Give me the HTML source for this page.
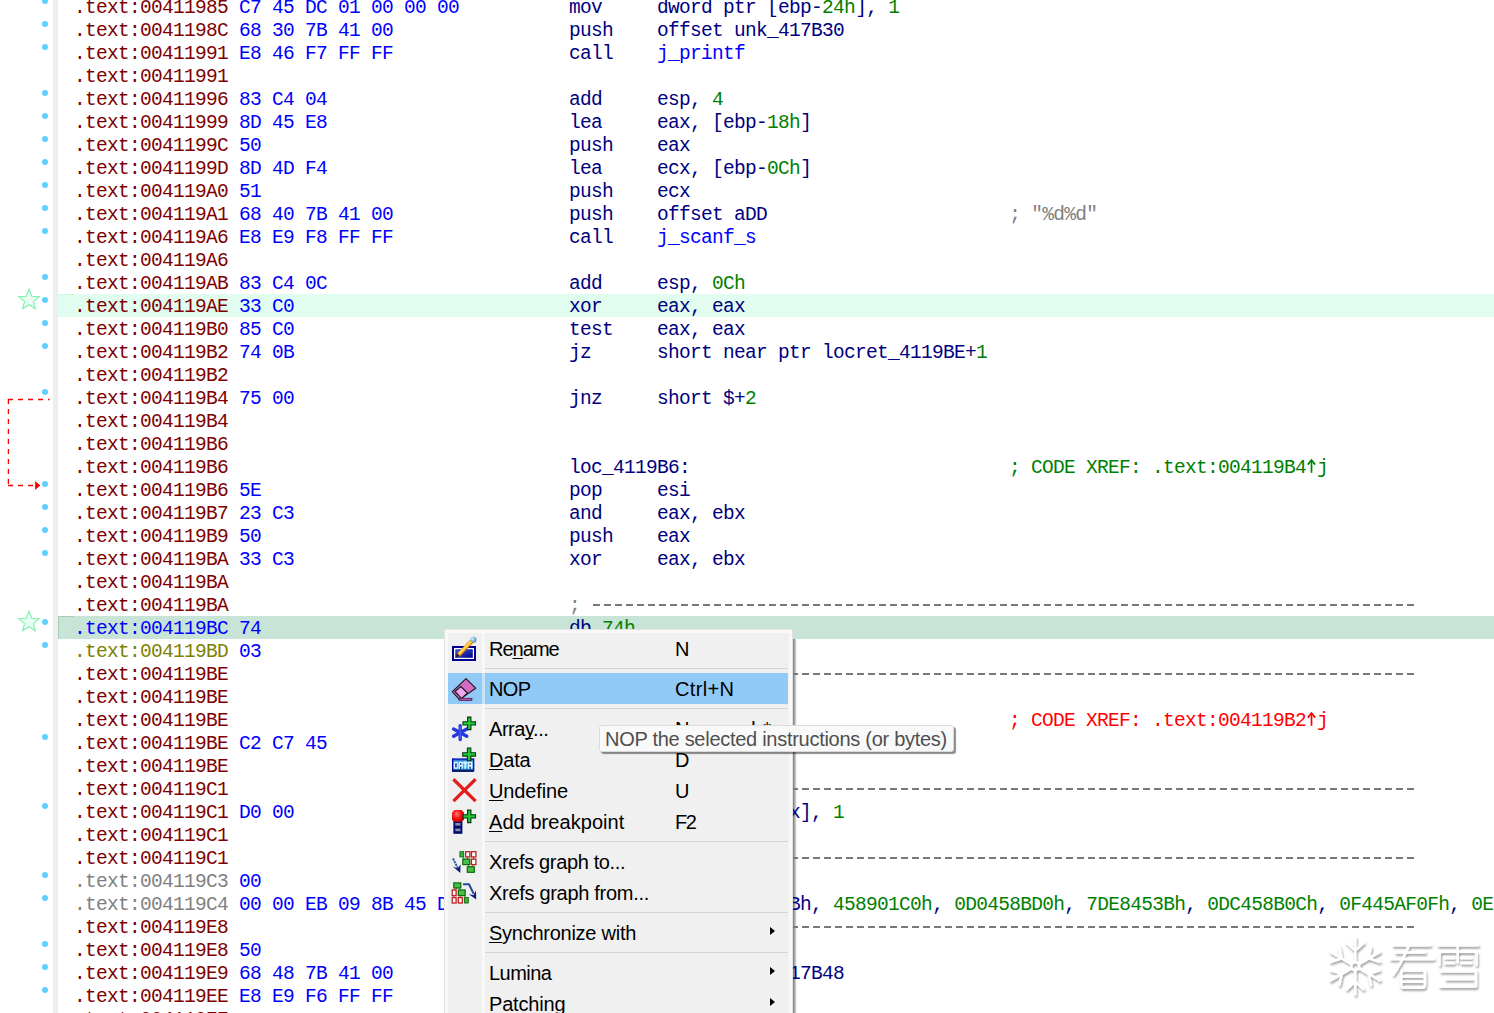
<!DOCTYPE html>
<html><head><meta charset="utf-8"><style>
html,body{margin:0;padding:0;width:1494px;height:1013px;overflow:hidden;background:#fff;position:relative}
#bar{position:absolute;left:53px;top:0;width:5px;height:1013px;background:#eeeeee}
.dot{position:absolute;left:42px;width:6px;height:6px;border-radius:50%;background:#60cffd}
#code{position:absolute;left:0;top:0;width:1494px;height:1013px}
.row{position:absolute;left:58px;right:0;height:23px;line-height:23px;padding-left:16px;white-space:pre;font-family:"Liberation Mono",monospace;font-size:19.5px;letter-spacing:-0.7017px;box-sizing:border-box}
.row>span{position:relative;top:1.6px}
.hl1{background:#e0fdef}
.hl2{background:#c8e4d6}
.a{color:#800000}.ab{color:#0000ff}.ao{color:#808000}.ag{color:#808080}
.y{color:#0000ff}.n{color:#000080}.k{color:#008000}.b{color:#0000ff}.g{color:#808080}.r{color:#ff0000}
#menu{position:absolute;left:444px;top:629px;width:349px;height:400px;box-sizing:border-box;border:1px solid #e2e2e2;background:#f9f9f9}
#menuin{position:absolute;left:448px;top:633px;width:341px;height:400px;background:#f0f0f0}
#mshadow{position:absolute;left:793px;top:636px;width:4px;height:400px;background:linear-gradient(to right,#7a7a7a,#a8a8a8 40%,#e8e8e8 80%,#fff)}
#mstrip{position:absolute;left:482px;top:633px;width:3px;height:400px;background:rgba(255,255,255,0.5);z-index:1}
.mi{position:absolute;left:448px;width:340px;height:31px}
.sel{background:#91c9f7}
.sep{position:absolute;left:485px;width:303px;height:1px;background:#d5d5d5}
.mt{position:absolute;left:489px;margin-top:1px;font-family:"Liberation Sans",sans-serif;font-size:20px;line-height:31px;height:31px;color:#000;white-space:pre;letter-spacing:-0.6px}
.ms{position:absolute;left:675px;margin-top:1px;font-family:"Liberation Sans",sans-serif;font-size:20px;line-height:31px;height:31px;color:#000;white-space:pre;letter-spacing:-0.6px}
.u{text-decoration:underline;text-decoration-skip-ink:none;text-underline-offset:2px;text-decoration-thickness:1px}
.arr{position:absolute;left:770px;width:0;height:0;border-top:4.5px solid transparent;border-bottom:4.5px solid transparent;border-left:5.5px solid #000}
.ic{position:absolute;left:448px;width:34px;height:31px}
#tip{position:absolute;left:599px;top:725px;width:355px;height:27px;box-sizing:border-box;border:1px solid #dadada;border-radius:3px;background:#f9f9f9;box-shadow:2px 2px 1px rgba(0,0,0,0.45)}
#tipt{position:absolute;left:605px;top:726px;font-family:"Liberation Sans",sans-serif;font-size:20px;line-height:27px;color:#4f4f4f;white-space:pre;letter-spacing:-0.6px}

.dash{position:absolute;left:591px;width:825px;height:2px;background:repeating-linear-gradient(to right,transparent 0,transparent 2.2px,#787878 2.2px,#787878 8.7px,transparent 8.7px,transparent 11px)}
.uarr{position:absolute;left:1306px}
.hid{color:transparent}
.curs{position:absolute;left:58px;width:16px;height:23px;box-sizing:border-box;border-left:1px solid #a6cfba;border-top:1px solid #a6cfba}
.curs1{position:absolute;left:58px;width:16px;height:1px;background:#d2f8e2}

</style></head><body>
<div id="gutter"></div>
<div id="bar"></div>
<div class="dot" style="top:-2px"></div><div class="dot" style="top:21px"></div><div class="dot" style="top:44px"></div><div class="dot" style="top:90px"></div><div class="dot" style="top:113px"></div><div class="dot" style="top:136px"></div><div class="dot" style="top:159px"></div><div class="dot" style="top:182px"></div><div class="dot" style="top:205px"></div><div class="dot" style="top:228px"></div><div class="dot" style="top:274px"></div><div class="dot" style="top:297px"></div><div class="dot" style="top:320px"></div><div class="dot" style="top:343px"></div><div class="dot" style="top:389px"></div><div class="dot" style="top:481px"></div><div class="dot" style="top:504px"></div><div class="dot" style="top:527px"></div><div class="dot" style="top:550px"></div><div class="dot" style="top:619px"></div><div class="dot" style="top:642px"></div><div class="dot" style="top:734px"></div><div class="dot" style="top:803px"></div><div class="dot" style="top:872px"></div><div class="dot" style="top:895px"></div><div class="dot" style="top:941px"></div><div class="dot" style="top:964px"></div><div class="dot" style="top:987px"></div>
<svg style="position:absolute;left:0;top:0" width="60" height="1013" viewBox="0 0 60 1013"><polygon points="29.00,289.20 31.76,296.20 39.27,296.66 33.47,301.45 35.35,308.74 29.00,304.70 22.65,308.74 24.53,301.45 18.73,296.66 26.24,296.20" fill="#e6fff2" stroke="#7ef0ae" stroke-width="1.1" stroke-linejoin="miter"/><polygon points="29.00,611.20 31.76,618.20 39.27,618.66 33.47,623.45 35.35,630.74 29.00,626.70 22.65,630.74 24.53,623.45 18.73,618.66 26.24,618.20" fill="#e6fff2" stroke="#7ef0ae" stroke-width="1.1" stroke-linejoin="miter"/><g stroke="#ff0000" stroke-width="1.3" fill="none"><path d="M8 399.5 H49.5" stroke-dasharray="5 5"/><path d="M8.4 399 V484" stroke-dasharray="5 5"/><path d="M8 485.5 H35" stroke-dasharray="5 5"/></g><path d="M35.1 480.9 L40.4 485.5 L35.1 490 Z" fill="#ff0000"/></svg>
<div id="mshadow"></div>
<div id="code">
<div class="row" style="top:-5px"><span class="a">.text:00411985</span> <span class="y">C7 45 DC 01 00 00 00</span>          <span class="n">mov</span>     <span class="n">dword ptr [ebp-</span><span class="k">24h</span><span class="n">], </span><span class="k">1</span></div>
<div class="row" style="top:18px"><span class="a">.text:0041198C</span> <span class="y">68 30 7B 41 00</span>                <span class="n">push</span>    <span class="n">offset unk_417B30</span></div>
<div class="row" style="top:41px"><span class="a">.text:00411991</span> <span class="y">E8 46 F7 FF FF</span>                <span class="n">call</span>    <span class="b">j_printf</span></div>
<div class="row" style="top:64px"><span class="a">.text:00411991</span></div>
<div class="row" style="top:87px"><span class="a">.text:00411996</span> <span class="y">83 C4 04</span>                      <span class="n">add</span>     <span class="n">esp, </span><span class="k">4</span></div>
<div class="row" style="top:110px"><span class="a">.text:00411999</span> <span class="y">8D 45 E8</span>                      <span class="n">lea</span>     <span class="n">eax, [ebp-</span><span class="k">18h</span><span class="n">]</span></div>
<div class="row" style="top:133px"><span class="a">.text:0041199C</span> <span class="y">50</span>                            <span class="n">push</span>    <span class="n">eax</span></div>
<div class="row" style="top:156px"><span class="a">.text:0041199D</span> <span class="y">8D 4D F4</span>                      <span class="n">lea</span>     <span class="n">ecx, [ebp-</span><span class="k">0Ch</span><span class="n">]</span></div>
<div class="row" style="top:179px"><span class="a">.text:004119A0</span> <span class="y">51</span>                            <span class="n">push</span>    <span class="n">ecx</span></div>
<div class="row" style="top:202px"><span class="a">.text:004119A1</span> <span class="y">68 40 7B 41 00</span>                <span class="n">push</span>    <span class="n">offset aDD</span>                      <span class="g">; "%d%d"</span></div>
<div class="row" style="top:225px"><span class="a">.text:004119A6</span> <span class="y">E8 E9 F8 FF FF</span>                <span class="n">call</span>    <span class="b">j_scanf_s</span></div>
<div class="row" style="top:248px"><span class="a">.text:004119A6</span></div>
<div class="row" style="top:271px"><span class="a">.text:004119AB</span> <span class="y">83 C4 0C</span>                      <span class="n">add</span>     <span class="n">esp, </span><span class="k">0Ch</span></div>
<div class="row hl1" style="top:294px"><span class="a">.text:004119AE</span> <span class="y">33 C0</span>                         <span class="n">xor</span>     <span class="n">eax, eax</span></div>
<div class="row" style="top:317px"><span class="a">.text:004119B0</span> <span class="y">85 C0</span>                         <span class="n">test</span>    <span class="n">eax, eax</span></div>
<div class="row" style="top:340px"><span class="a">.text:004119B2</span> <span class="y">74 0B</span>                         <span class="n">jz</span>      <span class="n">short near ptr locret_4119BE+</span><span class="k">1</span></div>
<div class="row" style="top:363px"><span class="a">.text:004119B2</span></div>
<div class="row" style="top:386px"><span class="a">.text:004119B4</span> <span class="y">75 00</span>                         <span class="n">jnz</span>     <span class="n">short $+</span><span class="k">2</span></div>
<div class="row" style="top:409px"><span class="a">.text:004119B4</span></div>
<div class="row" style="top:432px"><span class="a">.text:004119B6</span></div>
<div class="row" style="top:455px"><span class="a">.text:004119B6</span>                               <span class="n">loc_4119B6:</span>                             <span class="k">; CODE XREF: .text:004119B4 j</span></div>
<svg class="uarr" style="top:455px" width="11" height="23" viewBox="0 0 11 23"><g stroke="#008000" stroke-width="1.7" fill="none"><path d="M5.5 5.2 V17.8"/><path d="M1.8 9.6 L5.5 5 L9.2 9.6"/></g></svg>
<div class="row" style="top:478px"><span class="a">.text:004119B6</span> <span class="y">5E</span>                            <span class="n">pop</span>     <span class="n">esi</span></div>
<div class="row" style="top:501px"><span class="a">.text:004119B7</span> <span class="y">23 C3</span>                         <span class="n">and</span>     <span class="n">eax, ebx</span></div>
<div class="row" style="top:524px"><span class="a">.text:004119B9</span> <span class="y">50</span>                            <span class="n">push</span>    <span class="n">eax</span></div>
<div class="row" style="top:547px"><span class="a">.text:004119BA</span> <span class="y">33 C3</span>                         <span class="n">xor</span>     <span class="n">eax, ebx</span></div>
<div class="row" style="top:570px"><span class="a">.text:004119BA</span></div>
<div class="row" style="top:593px"><span class="a">.text:004119BA</span>                               <span class="g">;</span></div>
<div class="dash" style="top:604px"></div>
<div class="row hl2" style="top:616px"><span class="ab">.text:004119BC</span> <span class="y">74</span>                            <span class="n">db </span><span class="k">74h</span></div>
<div class="row" style="top:639px"><span class="ao">.text:004119BD</span> <span class="y">03</span>                            <span class="n">db</span>      <span class="k">3</span></div>
<div class="row" style="top:662px"><span class="a">.text:004119BE</span>                               <span class="g">;</span></div>
<div class="dash" style="top:673px"></div>
<div class="row" style="top:685px"><span class="a">.text:004119BE</span></div>
<div class="row" style="top:708px"><span class="a">.text:004119BE</span>                               <span class="n">locret_4119BE:</span>                          <span class="r">; CODE XREF: .text:004119B2 j</span></div>
<svg class="uarr" style="top:708px" width="11" height="23" viewBox="0 0 11 23"><g stroke="#ff0000" stroke-width="1.7" fill="none"><path d="M5.5 5.2 V17.8"/><path d="M1.8 9.6 L5.5 5 L9.2 9.6"/></g></svg>
<div class="row" style="top:731px"><span class="a">.text:004119BE</span> <span class="y">C2 C7 45</span>                      <span class="n">retn</span>    <span class="k">45C7h</span></div>
<div class="row" style="top:754px"><span class="a">.text:004119BE</span></div>
<div class="row" style="top:777px"><span class="a">.text:004119C1</span>                               <span class="g">;</span></div>
<div class="dash" style="top:788px"></div>
<div class="row" style="top:800px"><span class="a">.text:004119C1</span> <span class="y">D0 00</span>                         <span class="n">add</span>     <span class="n">byte ptr [eax], </span><span class="k">1</span></div>
<div class="row" style="top:823px"><span class="a">.text:004119C1</span></div>
<div class="row" style="top:846px"><span class="a">.text:004119C1</span>                               <span class="g">;</span></div>
<div class="dash" style="top:857px"></div>
<div class="row" style="top:869px"><span class="ag">.text:004119C3</span> <span class="y">00</span>                            <span class="n">db</span>      <span class="k">0</span></div>
<div class="row" style="top:892px"><span class="ag">.text:004119C4</span> <span class="y">00 00 EB 09 8B 45 DC 83</span>       <span class="n">dd</span>      <span class="n">830EB0900003Bh, </span><span class="k">458901C0h</span><span class="n">, </span><span class="k">0D0458BD0h</span><span class="n">, </span><span class="k">7DE8453Bh</span><span class="n">, </span><span class="k">0DC458B0Ch</span><span class="n">, </span><span class="k">0F445AF0Fh</span><span class="n">, </span><span class="k">0E8</span></div>
<div class="row" style="top:915px"><span class="a">.text:004119E8</span>                               <span class="g">;</span></div>
<div class="dash" style="top:926px"></div>
<div class="row" style="top:938px"><span class="a">.text:004119E8</span> <span class="y">50</span>                            <span class="n">push</span>    <span class="n">eax</span></div>
<div class="row" style="top:961px"><span class="a">.text:004119E9</span> <span class="y">68 48 7B 41 00</span>                <span class="n">push</span>    <span class="n">offset unk_417B48</span></div>
<div class="row" style="top:984px"><span class="a">.text:004119EE</span> <span class="y">E8 E9 F6 FF FF</span>                <span class="n">call</span>    <span class="b">j_printf</span></div>
<div class="row" style="top:1007px"><span class="a">.text:004119EE</span></div>
<div class="curs" style="top:616px"></div>
<div class="curs1" style="top:294px"></div>
</div>
<div id="menu"></div>
<div id="menuin"></div>
<div id="mstrip"></div>
<div class="mi sel" style="top:673px"></div>
<div class="sep" style="top:668px"></div>
<div class="sep" style="top:708px"></div>
<div class="sep" style="top:841px"></div>
<div class="sep" style="top:912px"></div>
<div class="sep" style="top:952px"></div>
<div class="mt" style="top:633px;letter-spacing:-0.98px">Re<span class="u">n</span>ame</div>
<div class="ms" style="top:633px;letter-spacing:0.00px">N</div>
<div class="mt" style="top:673px;letter-spacing:-0.65px">NOP</div>
<div class="ms" style="top:673px;letter-spacing:0.34px">Ctrl+N</div>
<div class="mt" style="top:713px;letter-spacing:-0.44px">Arra<span class="u">y</span>...</div>
<div class="ms" style="top:713px;letter-spacing:1.00px">Numpad *</div>
<div class="mt" style="top:744px;letter-spacing:-0.20px"><span class="u">D</span>ata</div>
<div class="ms" style="top:744px;letter-spacing:0.00px">D</div>
<div class="mt" style="top:775px;letter-spacing:-0.13px"><span class="u">U</span>ndefine</div>
<div class="ms" style="top:775px;letter-spacing:0.00px">U</div>
<div class="mt" style="top:806px;letter-spacing:0.06px"><span class="u">A</span>dd breakpoint</div>
<div class="ms" style="top:806px;letter-spacing:-1.50px">F2</div>
<div class="mt" style="top:846px;letter-spacing:-0.36px">Xrefs graph to...</div>
<div class="mt" style="top:877px;letter-spacing:-0.30px">Xrefs graph from...</div>
<div class="mt" style="top:917px;letter-spacing:-0.26px"><span class="u">S</span>ynchronize with</div>
<div class="arr" style="top:927px"></div>
<div class="mt" style="top:957px;letter-spacing:-0.54px">Lumina</div>
<div class="arr" style="top:967px"></div>
<div class="mt" style="top:988px;letter-spacing:-0.19px">Patching</div>
<div class="arr" style="top:998px"></div>
<svg class="ic" style="top:633px" viewBox="0 0 34 31" width="34" height="31">
<defs><linearGradient id="gRn" x1="0" y1="0" x2="1" y2="1"><stop offset="0" stop-color="#3a5ad8"/><stop offset="1" stop-color="#000088"/></linearGradient>
<radialGradient id="gBall" cx="0.35" cy="0.35" r="0.7"><stop offset="0" stop-color="#d8f0ff"/><stop offset="1" stop-color="#3a88c0"/></radialGradient></defs>
<rect x="4" y="13" width="24" height="15" fill="#00008c"/>
<rect x="6" y="15" width="20" height="11" fill="#fff"/>
<rect x="7.2" y="16.2" width="17.6" height="8.6" fill="url(#gRn)"/>
<line x1="10" y1="22.5" x2="24" y2="8" stroke="#e07018" stroke-width="4.2" stroke-linecap="butt"/>
<line x1="10" y1="22" x2="23.5" y2="8" stroke="#ffd030" stroke-width="2.6"/>
<line x1="11" y1="20.5" x2="23" y2="8.5" stroke="#fff6c0" stroke-width="0.8" stroke-dasharray="1.2 1"/>
<path d="M7.5 24.5 L9 20 L12 23 Z" fill="#202020"/>
<circle cx="25.5" cy="6.8" r="3" fill="url(#gBall)"/>
</svg>
<svg class="ic" style="top:673px" viewBox="0 0 34 31" width="34" height="31">
<path d="M18 5.6 L27.7 15.2 L11.4 26.6 L4.3 18.7 Z" fill="#d46cc6" stroke="#1a1a1a" stroke-width="1.1" stroke-linejoin="round"/>
<path d="M12.8 13.5 L19.5 20 L13.5 25.3 L7 18.5 Z" fill="#f2a6f0" stroke="#1a1a1a" stroke-width="1.1" stroke-linejoin="round"/>
<rect x="11" y="25.2" width="13" height="2.4" fill="#b04aa8" stroke="#3a1030" stroke-width="0.6"/>
</svg>
<svg class="ic" style="top:713px" viewBox="0 0 34 31" width="34" height="31">
<g stroke="#2636e0" stroke-width="3.4" stroke-linecap="round">
<line x1="12.2" y1="12.6" x2="12.2" y2="26.6"/>
<line x1="5.6" y1="16" x2="18.8" y2="23.2"/>
<line x1="5.6" y1="23.2" x2="18.8" y2="16"/>
</g>
<g stroke="#6a9af8" stroke-width="0.9" stroke-linecap="round" opacity="0.7">
<line x1="12.2" y1="13.5" x2="12.2" y2="25.5"/>
</g>
<path d="M19.6 4.1 h3.3 v4.6 h4.6 v3.3 h-4.6 v4.6 h-3.3 v-4.6 h-4.6 v-3.3 h4.6 Z" fill="#22c83a" stroke="#033a08" stroke-width="1.1"/>
</svg>
<svg class="ic" style="top:744px" viewBox="0 0 34 31" width="34" height="31">
<defs><linearGradient id="gDt" x1="0" y1="0" x2="0" y2="1"><stop offset="0" stop-color="#2a7ad8"/><stop offset="0.7" stop-color="#40b8e8"/><stop offset="1" stop-color="#0a4a90"/></linearGradient></defs>
<rect x="4" y="14.4" width="22.3" height="13.3" fill="#0000b8"/>
<rect x="5.3" y="15.6" width="19.8" height="10.8" fill="url(#gDt)"/>
<path d="M25.1 15 V27.7 H4 V26.4 H25.1 Z" fill="#001a40"/>
<g fill="#d8fcff">
<rect x="5.8" y="17.6" width="4" height="7.3"/>
<rect x="10.6" y="17.6" width="4.2" height="7.3"/>
<rect x="15.2" y="17.6" width="4.2" height="2"/><rect x="16.4" y="17.6" width="1.8" height="7.3"/>
<rect x="19.8" y="17.6" width="4.6" height="7.3"/>
</g>
<g fill="#0808b0">
<rect x="7.3" y="19.2" width="1.3" height="4.2"/>
<rect x="12.1" y="19.2" width="1.3" height="1.6"/><rect x="12.1" y="22.6" width="1.3" height="2.3"/>
<rect x="21.4" y="19.2" width="1.3" height="1.6"/><rect x="21.4" y="22.6" width="1.3" height="2.3"/>
</g>
<path d="M19.4 4 h3.4 v4.7 h4.7 v3.4 h-4.7 v4.7 h-3.4 v-4.7 h-4.7 v-3.4 h4.7 Z" fill="#22c83a" stroke="#033a08" stroke-width="1.1"/>
</svg>
<svg class="ic" style="top:775px" viewBox="0 0 34 31" width="34" height="31">
<g stroke="#e41c1c" stroke-width="3.3" stroke-linecap="square">
<line x1="6.6" y1="5.4" x2="26.4" y2="25"/>
<line x1="26.4" y1="5.4" x2="6.6" y2="25"/>
</g>
</svg>
<svg class="ic" style="top:806px" viewBox="0 0 34 31" width="34" height="31">
<defs><radialGradient id="gRed" cx="0.4" cy="0.35" r="0.7"><stop offset="0" stop-color="#ff8080"/><stop offset="0.5" stop-color="#ff1010"/><stop offset="1" stop-color="#b00000"/></radialGradient></defs>
<rect x="5.4" y="14" width="9" height="13.8" fill="#000a70"/>
<rect x="7.3" y="17" width="5.2" height="2.6" fill="#8a90a0"/>
<rect x="7.3" y="22.6" width="5.2" height="2.6" fill="#8a90a0"/>
<path d="M6.5 4 H13.5 L16 6.5 V13.5 L13.5 16 H6.5 L4 13.5 V6.5 Z" fill="url(#gRed)"/>
<path d="M19.6 4.1 h3.3 v4.6 h4.6 v3.3 h-4.6 v4.6 h-3.3 v-4.6 h-4.6 v-3.3 h4.6 Z" fill="#22c83a" stroke="#033a08" stroke-width="1.1"/>
</svg>
<svg class="ic" style="top:846px" viewBox="0 0 34 31" width="34" height="31">
<g stroke-width="0.9">
<line x1="14" y1="10" x2="17" y2="14" stroke="#108010"/>
<line x1="19.5" y1="10" x2="19.5" y2="13" stroke="#c02020"/>
<line x1="25.5" y1="10" x2="25.5" y2="13" stroke="#c02020"/>
<line x1="19" y1="18" x2="22" y2="21" stroke="#108010"/>
<line x1="25.5" y1="18" x2="24" y2="21" stroke="#c02020"/>
<rect x="11.9" y="5.7" width="3.8" height="5.2" fill="#38b838" stroke="#0a6a0a"/>
<rect x="17.7" y="5.7" width="4.1" height="5.2" fill="#fff" stroke="#c02020" stroke-width="1.3"/>
<rect x="23.4" y="5.7" width="4.5" height="5.2" fill="#fff" stroke="#c02020" stroke-width="1.3"/>
<rect x="14.8" y="13.1" width="7" height="5.5" fill="#48c048" stroke="#0a6a0a" stroke-width="1.2"/>
<rect x="23.4" y="13.1" width="4.5" height="5.5" fill="#fff" stroke="#c02020" stroke-width="1.3"/>
<rect x="19.3" y="20.8" width="7" height="5.5" fill="#48c048" stroke="#0a6a0a" stroke-width="1.2"/>
</g>
<line x1="5" y1="12.5" x2="10.5" y2="23.5" stroke="#3050a8" stroke-width="2" stroke-dasharray="2.2 0.8"/>
<path d="M12.3 27 L12.6 18.5 L9.8 22.6 L4.8 20.5 Z" fill="#0a1a78"/>
</svg>
<svg class="ic" style="top:877px" viewBox="0 0 34 31" width="34" height="31">
<g stroke-width="0.9">
<line x1="9" y1="11" x2="6" y2="13" stroke="#c02020"/>
<line x1="11" y1="11" x2="13" y2="13" stroke="#108010"/>
<line x1="6" y1="18.6" x2="6" y2="20.6" stroke="#c02020"/>
<line x1="12.3" y1="18.6" x2="12.3" y2="20.6" stroke="#c02020"/>
<line x1="16" y1="18.6" x2="18" y2="20.6" stroke="#108010"/>
<rect x="5.8" y="5.9" width="7" height="5.1" fill="#48c048" stroke="#0a6a0a" stroke-width="1.2"/>
<rect x="4.2" y="13" width="3.9" height="5.6" fill="#fff" stroke="#c02020" stroke-width="1.3"/>
<rect x="10.3" y="13" width="6.9" height="5.6" fill="#48c048" stroke="#0a6a0a" stroke-width="1.2"/>
<rect x="4.2" y="20.6" width="3.9" height="5.4" fill="#fff" stroke="#c02020" stroke-width="1.3"/>
<rect x="10.3" y="20.6" width="4" height="5.4" fill="#fff" stroke="#c02020" stroke-width="1.3"/>
<rect x="16.4" y="20.6" width="3.9" height="5.4" fill="#38b838" stroke="#0a6a0a"/>
</g>
<path d="M15 7.3 L21 7.3 L25.8 17" fill="none" stroke="#2848a0" stroke-width="2"/>
<path d="M28.2 22.6 L28 13.6 L25.6 18.2 L20.6 17 Z" fill="#0a1a78"/>
</svg>

<div id="tip"></div>
<div id="tipt" style="letter-spacing:-0.28px">NOP the selected instructions (or bytes)</div>
<svg style="position:absolute;left:1300px;top:920px" width="194" height="93" viewBox="1300 920 194 93"><defs><filter id="wsh" x="-20%" y="-20%" width="140%" height="140%"><feGaussianBlur in="SourceAlpha" stdDeviation="1.1"/><feOffset dx="1" dy="2" result="o"/><feComponentTransfer><feFuncA type="linear" slope="0.42"/></feComponentTransfer><feMerge><feMergeNode/><feMergeNode in="SourceGraphic"/></feMerge></filter></defs><g filter="url(#wsh)" stroke="#ffffff" stroke-width="2.4" fill="none" stroke-linecap="round" stroke-linejoin="round"><path d="M1355.2 961.6 L1355.2 937.6 M1355.2 950.6 L1346.7 942.9 M1355.2 950.6 L1363.7 942.9 M1351.3 963.9 L1330.5 951.9 M1341.8 958.4 L1330.8 961.9 M1341.8 958.4 L1339.4 947.1 M1351.3 968.4 L1330.5 980.4 M1341.8 973.9 L1339.4 985.1 M1341.8 973.9 L1330.8 970.3 M1355.2 970.6 L1355.2 994.6 M1355.2 981.6 L1363.7 989.3 M1355.2 981.6 L1346.7 989.3 M1359.1 968.4 L1379.9 980.4 M1368.6 973.9 L1379.6 970.3 M1368.6 973.9 L1371.0 985.1 M1359.1 963.9 L1379.9 951.9 M1368.6 958.4 L1371.0 947.1 M1368.6 958.4 L1379.6 961.9" /><polygon points="1359.1,968.4 1355.2,970.6 1351.3,968.4 1351.3,963.9 1355.2,961.6 1359.1,963.9" fill="none"/><path d="M1393.5 945.3 H1430"/><path d="M1396 952.5 H1425"/><path d="M1391 959 H1433.6"/><path d="M1409 945.5 Q1402 962 1393.5 974.5"/><path d="M1403 970.6 H1423 Q1425 970.6 1425 973 V985 Q1425 987.5 1423 987.5 H1403 Q1401.3 987.5 1401.3 985 V973 Q1401.3 970.6 1403 970.6 Z"/><path d="M1401.3 976.5 H1425"/><path d="M1401.3 981.7 H1425"/><path d="M1438.5 945.3 H1478"/><path d="M1441.5 951.8 H1474 Q1476.5 951.8 1476.5 954 V965"/><path d="M1441.5 951.8 Q1439.6 951.8 1439.6 954 V965"/><path d="M1457.8 946 V962"/><path d="M1445 958 H1454"/><path d="M1461 958 H1471"/><path d="M1445 963 H1454"/><path d="M1461 963 H1471"/><path d="M1441 971.3 H1476 V986.5 H1440"/><path d="M1446 979 H1476"/></g></svg>
</body></html>
